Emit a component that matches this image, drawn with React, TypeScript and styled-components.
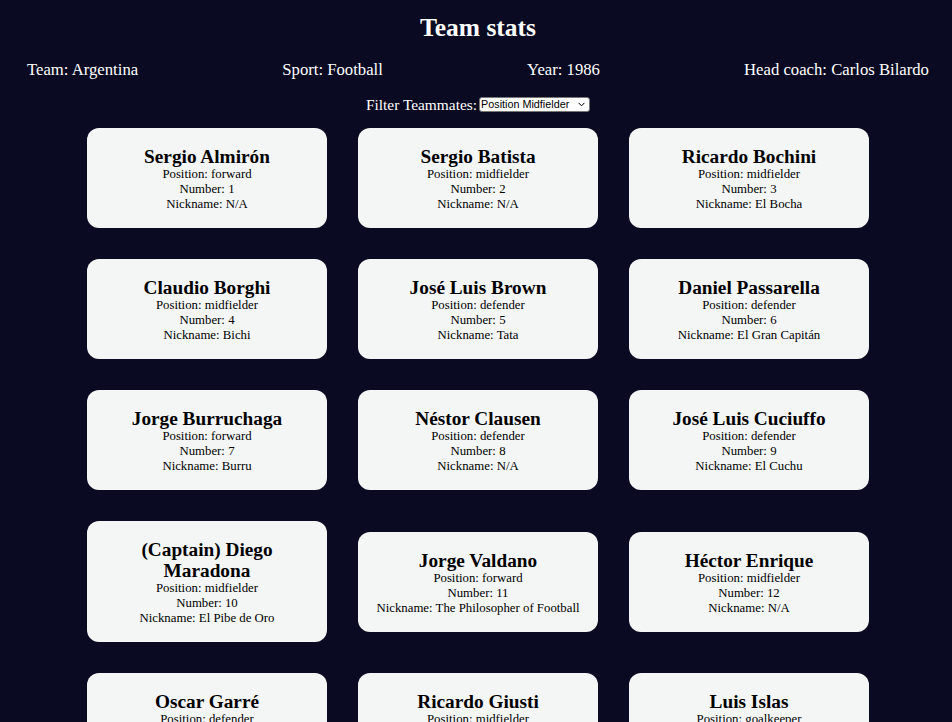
import React from "react";
import styled, { createGlobalStyle } from "styled-components";

const GlobalStyle = createGlobalStyle`
  html, body {
    margin: 0;
    padding: 0;
    background: #0a0a22;
  }
  body {
    font-family: "Liberation Serif", "Times New Roman", serif;
    color: #ffffff;
  }
`;

const Page = styled.div`
  padding: 14px 23px 0 27px;
  display: flex;
  flex-direction: column;
  align-items: stretch;
`;

const Title = styled.h2`
  margin: 0;
  font-size: 25.5px;
  font-weight: bold;
  text-align: center;
  line-height: 28px;
`;

const InfoRow = styled.div`
  display: flex;
  justify-content: space-between;
  margin-top: 19px;
  font-size: 16.7px;
  line-height: 18px;
`;

const FilterRow = styled.div`
  display: flex;
  justify-content: center;
  align-items: center;
  gap: 2px;
  margin-top: 17px;
  font-size: 15.4px;
  line-height: 17px;
`;

const SelectWrap = styled.span`
  position: relative;
  display: inline-flex;
  align-items: center;
`;

const Select = styled.select`
  appearance: none;
  -webkit-appearance: none;
  font-family: "Liberation Sans", Arial, sans-serif;
  font-size: 10.8px;
  height: 15px;
  width: 111px;
  padding: 0 14px 0 1px;
  border: 1px solid #767676;
  border-radius: 3px;
  background: #ffffff;
  color: #000000;
  line-height: 13px;
`;

const Chevron = styled.svg`
  position: absolute;
  right: 5px;
  top: 5px;
  width: 7px;
  height: 5px;
  pointer-events: none;
`;

const Grid = styled.div`
  display: grid;
  grid-template-columns: repeat(3, 240px);
  column-gap: 31px;
  row-gap: 31px;
  justify-content: center;
  align-items: center;
  margin-top: 15px;
`;

const Card = styled.div`
  background: #f4f6f6;
  color: #000000;
  border-radius: 12px;
  padding: 18px 16px 16px;
  text-align: center;
`;

const Name = styled.h3`
  margin: 0;
  font-size: 19.3px;
  font-weight: bold;
  line-height: 21px;
`;

const Line = styled.div`
  font-size: 12.8px;
  line-height: 15px;
`;

type Player = { name: string; position: string; number: number; nickname: string };

const players: Player[] = [
  { name: "Sergio Almirón", position: "forward", number: 1, nickname: "N/A" },
  { name: "Sergio Batista", position: "midfielder", number: 2, nickname: "N/A" },
  { name: "Ricardo Bochini", position: "midfielder", number: 3, nickname: "El Bocha" },
  { name: "Claudio Borghi", position: "midfielder", number: 4, nickname: "Bichi" },
  { name: "José Luis Brown", position: "defender", number: 5, nickname: "Tata" },
  { name: "Daniel Passarella", position: "defender", number: 6, nickname: "El Gran Capitán" },
  { name: "Jorge Burruchaga", position: "forward", number: 7, nickname: "Burru" },
  { name: "Néstor Clausen", position: "defender", number: 8, nickname: "N/A" },
  { name: "José Luis Cuciuffo", position: "defender", number: 9, nickname: "El Cuchu" },
  { name: "(Captain) Diego Maradona", position: "midfielder", number: 10, nickname: "El Pibe de Oro" },
  { name: "Jorge Valdano", position: "forward", number: 11, nickname: "The Philosopher of Football" },
  { name: "Héctor Enrique", position: "midfielder", number: 12, nickname: "N/A" },
  { name: "Oscar Garré", position: "defender", number: 13, nickname: "N/A" },
  { name: "Ricardo Giusti", position: "midfielder", number: 14, nickname: "N/A" },
  { name: "Luis Islas", position: "goalkeeper", number: 15, nickname: "N/A" },
];

export default function App() {
  return (
    <>
      <GlobalStyle />
      <Page>
        <Title>Team stats</Title>
        <InfoRow>
          <span>Team: Argentina</span>
          <span>Sport: Football</span>
          <span>Year: 1986</span>
          <span>Head coach: Carlos Bilardo</span>
        </InfoRow>
        <FilterRow>
          <label htmlFor="filter">Filter Teammates:</label>
          <SelectWrap>
            <Select id="filter" defaultValue="midfielder">
              <option value="all">All</option>
              <option value="forward">Position Forward</option>
              <option value="midfielder">Position Midfielder</option>
              <option value="defender">Position Defender</option>
              <option value="goalkeeper">Position Goalkeeper</option>
            </Select>
            <Chevron viewBox="0 0 7 5" aria-hidden="true">
              <path d="M0.5 0.8 L3.5 3.8 L6.5 0.8" fill="none" stroke="#000" strokeWidth="1" />
            </Chevron>
          </SelectWrap>
        </FilterRow>
        <Grid>
          {players.map((p) => (
            <Card key={p.number}>
              <Name>{p.name}</Name>
              <Line>Position: {p.position}</Line>
              <Line>Number: {p.number}</Line>
              <Line>Nickname: {p.nickname}</Line>
            </Card>
          ))}
        </Grid>
      </Page>
    </>
  );
}
